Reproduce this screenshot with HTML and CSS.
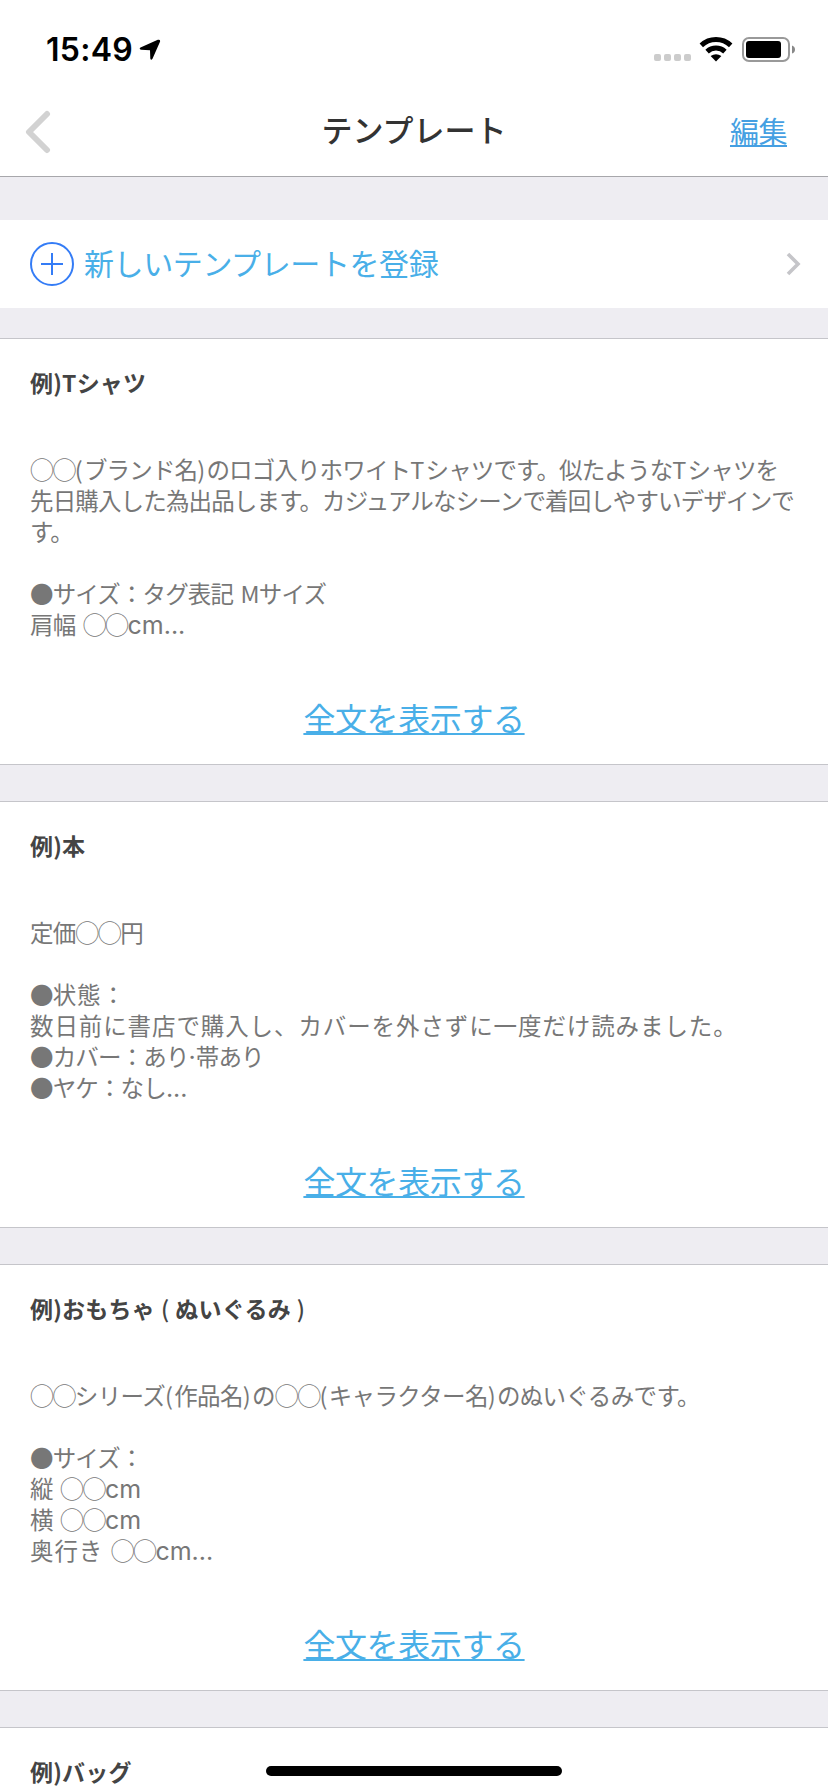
FILE: index.html
```html
<!DOCTYPE html>
<html lang="ja">
<head>
  <meta charset="UTF-8">
  <title>テンプレート</title>
  <meta name="viewport" content="width=device-width, initial-scale=1.0">
  <link rel="stylesheet" href="styles.css">
</head>
<body>

<!-- ステータスバー -->
<div class="status-bar">
  <span class="time">15:49</span>
  <svg class="location" width="22" height="22" viewBox="0 0 22 22"><path d="M1.5 8.5 18.8 .8Q21.6 .2 21 2.8L13.5 19.8Q12 22 11.3 19.5L11 11.2 2 10.8Q-.3 9.8 1.5 8.5Z"/></svg>
  <div class="signal"><i></i><i></i><i></i><i></i></div>
  <svg class="wifi" width="34" height="25" viewBox="0 0 34 25">
    <path d="M2.3 8.4A21.5 21.5 0 0 1 31.7 8.4M8.1 14.6A13 13 0 0 1 25.9 14.6" fill="none" stroke="#000" stroke-width="5"/>
    <path d="M11.6 19Q17 15.3 22.4 19L17 24.4Z"/>
  </svg>
  <svg class="battery" width="54" height="25" viewBox="0 0 54 25">
    <rect x="1" y="1" width="46" height="23" rx="6" fill="none" stroke="#999" stroke-width="2"/>
    <rect x="4" y="4" width="35" height="17" rx="3"/>
    <path d="M50 8.5Q53 9.5 53 12.5T50 16.5Z" fill="#888"/>
  </svg>
</div>

<!-- ナビゲーション -->
<div class="nav">
  <svg class="back" width="26" height="44" viewBox="0 0 26 44"><path d="M22 4 4 22 22 40"/></svg>
  <h1>テンプレート</h1>
  <a class="edit">編集</a>
</div>

<div class="new-template">
  <svg class="plus" width="44" height="44" viewBox="0 0 44 44"><circle cx="22" cy="22" r="21"/><path d="M11 22H33M22 11V33"/></svg>
  <span class="new-label">新しいテンプレートを登録</span>
  <svg class="chevron" width="16" height="24" viewBox="0 0 16 24"><path d="M2 2 12 12 2 22"/></svg>
</div>

<!-- テンプレート一覧 -->
<div class="card">
  <h2>例)Tシャツ</h2>
  <div class="text">
    <p><span class="circles">◯◯</span><span class="half">(</span>ブランド名<span class="half">)</span>のロゴ入りホワイト<span class="half">T</span>シャツです。似たような<span class="half">T</span>シャツを</p>
    <p>先日購入した為出品します。カジュアルなシーンで着回しやすいデザインで</p>
    <p>す。</p>
    <p></p>
    <p>●サイズ：タグ表記 Mサイズ</p>
    <p>肩幅 <span class="circles">◯◯</span><span class="latin">cm...</span></p>
  </div>
  <a class="more">全文を表示する</a>
</div>

<div class="card">
  <h2>例)本</h2>
  <div class="text">
    <p>定価<span class="circles">◯◯</span>円</p>
    <p></p>
    <p>●<span class="wide">状態</span>：</p>
    <p class="wide">数日前に書店で購入し、カバーを外さずに一度だけ読みました。</p>
    <p>●カバー：あり<span class="latin">·</span>帯あり</p>
    <p>●ヤケ：なし<span class="latin">...</span></p>
  </div>
  <a class="more">全文を表示する</a>
</div>

<div class="card">
  <h2>例)おもちゃ<span class="paren">(</span>ぬいぐるみ<span class="paren">)</span></h2>
  <div class="text">
    <p class="loose"><span class="circles">◯◯</span>シリーズ<span class="half">(</span>作品名<span class="half">)</span>の<span class="circles">◯◯</span><span class="half">(</span>キャラクター名<span class="half">)</span>のぬいぐるみです。</p>
    <p></p>
    <p>●サイズ：</p>
    <p>縦 <span class="circles">◯◯</span><span class="latin">cm</span></p>
    <p>横 <span class="circles">◯◯</span><span class="latin">cm</span></p>
    <p><span class="wide">奥行き</span> <span class="circles">◯◯</span><span class="latin">cm...</span></p>
  </div>
  <a class="more">全文を表示する</a>
</div>

<div class="card last">
  <h2>例)バッグ</h2>
</div>

<div class="home-indicator"></div>

</body>
</html>
```
FILE: styles.css
```css
* { box-sizing: border-box; }
body {
  font-family: "Noto Sans CJK JP", sans-serif;
  background: #eeedf2;
  margin: 0;
}
h1, h2, p { margin: 0; }
svg { flex: none; }

.status-bar {
  display: flex;
  height: 88px;
  padding: 0 32px 0 46px;
  background: white;
}
.time {
  width: 93px;
  margin-top: 30px;
  font-family: Inter, sans-serif;
  font-size: 32px;
  line-height: 40px;
  font-weight: 600;
  letter-spacing: 0.3px;
}
.location { margin-top: 39px; }
.signal {
  display: flex;
  gap: 3px;
  margin: 54px 8px 0 auto;
}
.signal i {
  width: 7px;
  height: 7px;
  border-radius: 2px;
  background: #ccc;
}
.wifi { margin: 37px 9px 0 0; }
.battery { margin-top: 37px; }

.nav {
  display: grid;
  grid-template-columns: 1fr auto 1fr;
  align-items: center;
  height: 89px;
  padding: 0 41px 0 25px;
  background: white;
  border-bottom: 1px solid #a7a7ab;
}
.back path {
  fill: none;
  stroke: #d2d2d2;
  stroke-width: 6;
  stroke-linecap: round;
  stroke-linejoin: round;
}
h1 {
  padding-left: 16px;
  margin-top: -7px;
  font-size: 31px;
  font-weight: 500;
  letter-spacing: 0;
  color: #333;
}
.edit {
  justify-self: end;
  margin-top: -5px;
  font-size: 29px;
  letter-spacing: -0.5px;
  color: #459fe2;
  text-decoration: underline;
  text-decoration-thickness: 2px;
  text-underline-offset: 2px;
  text-decoration-skip-ink: none;
}

.new-template {
  display: flex;
  align-items: center;
  height: 88px;
  margin: 43px 0 30px;
  padding: 0 26px 0 30px;
  background: white;
}
.plus {
  fill: none;
  stroke: #347cf6;
  stroke-width: 2;
}
.new-label {
  flex: 1;
  margin: -5px 0 0 10px;
  font-size: 30px;
  letter-spacing: -0.4px;
  color: #49afe8;
}
.chevron {
  fill: none;
  stroke: #c5c5c9;
  stroke-width: 3.6;
}

.card {
  display: flex;
  flex-direction: column;
  height: 427px;
  margin-bottom: 36px;
  padding: 0 30px;
  background: white;
  border: solid #c5c5ca;
  border-width: 1px 0;
}
.card.last {
  height: 65px;
  margin-bottom: 0;
  border-bottom: none;
}
h2 {
  height: 34px;
  margin-top: 26px;
  font-size: 23px;
  line-height: 34px;
  letter-spacing: 0.2px;
  color: #444;
}
.paren {
  font-weight: 500;
  margin: 0 6px;
}
.text {
  margin-top: 55px;
  font-size: 23.5px;
  letter-spacing: -0.85px;
  word-spacing: 3px;
  color: #777;
  white-space: nowrap;
}
.text p {
  height: 31px;
  line-height: 31px;
}
.text .loose { letter-spacing: -0.65px; }
.text .wide { letter-spacing: 0.9px; }
.half { letter-spacing: 1.2px; }
.circles {
  font-size: 24px;
  line-height: 1;
  letter-spacing: -1.6px;
}
.latin {
  font-family: Inter, sans-serif;
  font-size: 25px;
  line-height: 1;
  letter-spacing: 0;
}
.more {
  align-self: center;
  margin-top: 54px;
  font-size: 32px;
  line-height: 46px;
  letter-spacing: -0.4px;
  color: #49afe8;
  text-decoration: underline;
  text-decoration-thickness: 2px;
  text-underline-offset: 2px;
  text-decoration-skip-ink: none;
}

/* 画面下のバー */
.home-indicator {
  position: absolute;
  left: 266px;
  top: 1766px;
  width: 296px;
  height: 10px;
  border-radius: 5px;
  background: #000;
}
```
